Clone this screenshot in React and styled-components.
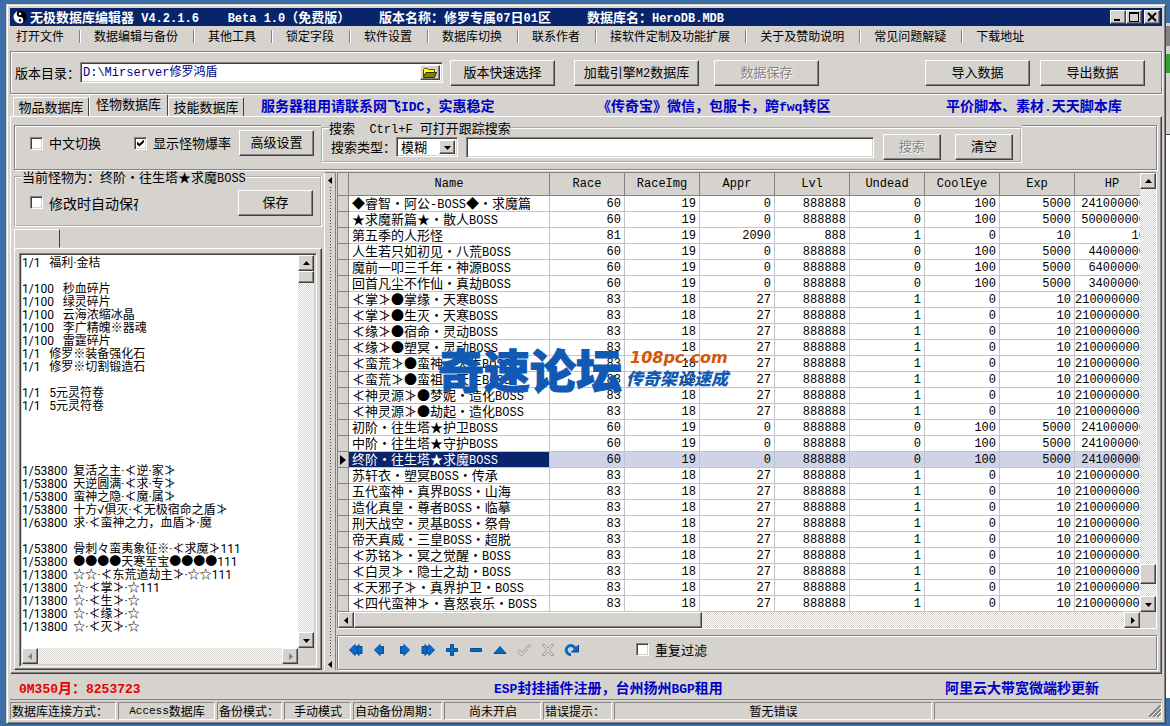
import React from "react";
import styled, { createGlobalStyle, css } from "styled-components";

const face = "#d6d3ce";
const shade = "#848284";
const dark = "#424142";
const navy = "#08246b";
const blue = "#0000c6";
const cjk = '"Noto Sans CJK SC", sans-serif';
const mono = '"Liberation Mono", "Noto Sans CJK SC", monospace';

const menuItems = [
  "打开文件",
  "数据编辑与备份",
  "其他工具",
  "锁定字段",
  "软件设置",
  "数据库切换",
  "联系作者",
  "接软件定制及功能扩展",
  "关于及赞助说明",
  "常见问题解疑",
  "下载地址",
];

const columns = ["Race", "RaceImg", "Appr", "Lvl", "Undead", "CoolEye", "Exp", "HP"];

const tower = (hp) => [60, 19, 0, 888888, 0, 100, 5000, hp];
const boss = [83, 18, 27, 888888, 1, 0, 10, 2100000000];

const monsters = [
  ["◆睿智·阿公-BOSS◆·求魔篇", tower(241000000)],
  ["★求魔新篇★·散人BOSS", tower(500000000)],
  ["第五季的人形怪", [81, 19, 2090, 888, 1, 0, 10, 10]],
  ["人生若只如初见·八荒BOSS", tower(44000000)],
  ["魔前一叩三千年·神源BOSS", tower(64000000)],
  ["回首凡尘不作仙·真劫BOSS", tower(34000000)],
  ["≮掌≯●掌缘·天寒BOSS", boss],
  ["≮掌≯●生灭·天寒BOSS", boss],
  ["≮缘≯●宿命·灵动BOSS", boss],
  ["≮缘≯●塑冥·灵动BOSS", boss],
  ["≮蛮荒≯●蛮神·天生BOSS", boss],
  ["≮蛮荒≯●蛮祖·天生BOSS", boss],
  ["≮神灵源≯●梦妮·造化BOSS", boss],
  ["≮神灵源≯●劫起·造化BOSS", boss],
  ["初阶·往生塔★护卫BOSS", tower(241000000)],
  ["中阶·往生塔★守护BOSS", tower(241000000)],
  ["终阶·往生塔★求魔BOSS", tower(241000000)],
  ["苏轩衣·塑冥BOSS·传承", boss],
  ["五代蛮神·真界BOSS·山海", boss],
  ["造化真皇·尊者BOSS·临摹", boss],
  ["刑天战空·灵基BOSS·祭骨", boss],
  ["帝天真威·三皇BOSS·超脱", boss],
  ["≮苏铭≯·冥之觉醒·BOSS", boss],
  ["≮白灵≯·隐士之劫·BOSS", boss],
  ["≮天邪子≯·真界护卫·BOSS", boss],
  ["≮四代蛮神≯·喜怒哀乐·BOSS", boss],
];

const currentRow = 16;

const drops = `1/1   福利·金桔

1/100   秒血碎片
1/100   绿灵碎片
1/100   云海浓缩冰晶
1/100   李广精魄※器魂
1/100   雷霆碎片
1/1   修罗※装备强化石
1/1   修罗※切割锻造石

1/1   5元灵符卷
1/1   5元灵符卷




1/53800  复活之主·≮逆·家≯
1/53800  天逆圆满·≮求·专≯
1/53800  蛮神之隐·≮魔·属≯
1/53800  十方√俱灭·≮无极宿命之盾≯
1/63800  求·≮蛮神之力，血盾≯·魔

1/53800  骨刺々蛮夷象征※·≮求魔≯111
1/53800  ●●●●天寒至宝●●●●111
1/13800  ☆☆·≮东荒道劫主≯·☆☆111
1/13800  ☆·≮掌≯·☆111
1/13800  ☆·≮生≯·☆
1/13800  ☆·≮缘≯·☆
1/13800  ☆·≮灭≯·☆`;

const statusParts = [
  { text: "数据库连接方式：", width: 106 },
  { text: "Access数据库", width: 97, center: true },
  { text: "备份模式：", width: 65 },
  { text: "手动模式", width: 67, center: true },
  { text: "自动备份周期：", width: 89 },
  { text: "尚未开启", width: 97, center: true },
  { text: "错误提示：", width: 69 },
  { text: "暂无错误", width: 318, center: true },
];

// Latin runs use a narrower monospaced face, the middle dot takes a full cell
function Mixed({ text }) {
  return text.split(/([ -~]+|·)/).map((part, i) => {
    if (part === "·") return <Dot key={i}>·</Dot>;
    if (i % 2) return <Latin key={i}>{part}</Latin>;
    return part;
  });
}

function Arrow({ dir, disabled }) {
  const paths = {
    up: "M0 5h7L3.5 1z",
    down: "M0 2h7L3.5 6z",
    left: "M5 0v7L1 3.5z",
    right: "M2 0v7L6 3.5z",
  };
  return (
    <svg width="7" height="7" viewBox="0 0 7 7" aria-hidden="true">
      <path d={paths[dir]} fill={disabled ? shade : "#000"} />
    </svg>
  );
}

function NavIcon({ name }) {
  const fill = { fill: "#0869c6", stroke: "#084a9c", strokeWidth: 1 };
  const off = { fill: "none", stroke: "#a5a29c", strokeWidth: 1 };
  const icons = {
    first: (
      <g {...fill}>
        <path d="M5.500 8 11 2.500v2h3v7h-3v2z" />
        <path d="M1.500 8 7 2.500v2h2.500v7H7v2z" />
      </g>
    ),
    prior: <path {...fill} d="M2.500 8 8 2.500v2h3.500v7H8v2z" />,
    next: <path {...fill} d="M13.500 8 8 2.500v2H4.500v7H8v2z" />,
    last: (
      <g {...fill}>
        <path d="M10.500 8 5 2.500v2H2v7h3v2z" />
        <path d="M14.500 8 9 2.500v2H6.500v7H9v2z" />
      </g>
    ),
    insert: <path {...fill} d="M6.500 2.500h3v4h4v3h-4v4h-3v-4h-4v-3h4z" />,
    remove: <path {...fill} d="M2.500 6.500h11v3h-11z" />,
    edit: <path {...fill} d="M8 4.500 14 11.500H2z" />,
    post: <path {...off} d="M1.500 9 3.500 7.500 6 10.500 12.500 2.500 14.500 3.500 6.500 13.500H5z" />,
    cancel: (
      <path
        {...off}
        d="M2 2.500h3l3 3.500 3-3.500h3L9.500 8l4.500 5.500h-3L8 10l-3 3.500H2L6.500 8z"
      />
    ),
    refresh: (
      <g>
        <path d="M7 12.500A4.500 4.500 0 1 1 11 6.500" fill="none" stroke="#0869c6" strokeWidth="3" />
        <path d="M14.500 3v7h-7z" fill="#0869c6" stroke="#084a9c" />
      </g>
    ),
  };
  return (
    <svg width="16" height="16" viewBox="0 0 16 16" aria-hidden="true">
      {icons[name]}
    </svg>
  );
}

function ScrollBar({ horizontal, disabled, children }) {
  return (
    <Track $horizontal={horizontal}>
      <ScrollButton disabled={disabled} aria-label={horizontal ? "向左" : "向上"}>
        <Arrow dir={horizontal ? "left" : "up"} disabled={disabled} />
      </ScrollButton>
      <Run $horizontal={horizontal}>{children}</Run>
      <ScrollButton disabled={disabled} aria-label={horizontal ? "向右" : "向下"}>
        <Arrow dir={horizontal ? "right" : "down"} disabled={disabled} />
      </ScrollButton>
    </Track>
  );
}

function TitleBar() {
  return (
    <Title>
      <svg width="14" height="14" viewBox="0 0 14 14" aria-hidden="true">
        <circle cx="7" cy="7" r="6.500" fill="#000" />
        <path d="M7 .5a6.500 6.500 0 0 0 0 13 3.250 3.250 0 0 0 0-6.500 3.250 3.250 0 0 1 0-6.500z" fill="#fff" />
        <circle cx="7" cy="3.700" r="1.200" fill="#fff" />
        <circle cx="7" cy="10.300" r="1.200" fill="#000" />
      </svg>
      <TitleText>
        <Mixed text="无极数据库编辑器 V4.2.1.6    Beta 1.0（免费版）    版本名称：修罗专属07日01区     数据库名：HeroDB.MDB" />
      </TitleText>
      <WindowButton aria-label="最小化">
        <svg width="12" height="10"><path d="M2 7h6v2H2z" /></svg>
      </WindowButton>
      <WindowButton aria-label="最大化">
        <svg width="12" height="10"><path d="M1 0h10v10H1zM2 2v7h8V2z" fillRule="evenodd" /></svg>
      </WindowButton>
      <WindowButton aria-label="关闭" $last>
        <svg width="12" height="10"><path d="M2 1l8 8M10 1l-8 8" stroke="#000" strokeWidth="2" /></svg>
      </WindowButton>
    </Title>
  );
}

function MonsterPanel() {
  return (
    <Side>
      <GroupBox>
        <Legend>当前怪物为：终阶·往生塔★求魔<Latin>BOSS</Latin></Legend>
        <SaveRow>
          <CheckLabel $cut>
            <CheckBox type="checkbox" />
            <span>修改时自动保存</span>
          </CheckLabel>
          <Button $width={75}>保存</Button>
        </SaveRow>
      </GroupBox>
      <BlankTab />
      <MemoPage>
        <MemoFrame>
          <Memo aria-label="怪物爆率" wrap="off" spellCheck="false" defaultValue={drops} />
          <ScrollBar>
            <Thumb $size={12} />
          </ScrollBar>
          <ScrollBar horizontal disabled />
        </MemoFrame>
      </MemoPage>
    </Side>
  );
}

function MonsterGrid() {
  return (
    <GridFrame>
      <TableView>
        <Table>
          <colgroup>
            <col width="11" />
            <col width="201" />
            {columns.map((c) => <col key={c} width="75" />)}
          </colgroup>
          <thead>
            <tr>
              <HeadCell />
              <HeadCell>Name</HeadCell>
              {columns.map((c) => <HeadCell key={c}>{c}</HeadCell>)}
            </tr>
          </thead>
          <tbody>
            {monsters.map(([name, values], i) => (
              <Row key={name} $current={i === currentRow}>
                <Indicator>
                  {i === currentRow && (
                    <svg width="6" height="10"><path d="M0 0v10l6-5z" /></svg>
                  )}
                </Indicator>
                <NameCell $current={i === currentRow}><Mixed text={name} /></NameCell>
                {values.map((v, j) => <NumberCell key={columns[j]}>{v}</NumberCell>)}
              </Row>
            ))}
          </tbody>
        </Table>
      </TableView>
      <ScrollBar>
        <Thumb $size={20} $end={12} />
      </ScrollBar>
      <ScrollBar horizontal>
        <Thumb $horizontal $size={348} />
      </ScrollBar>
      <Watermark>
        <MarkName>奇速论坛</MarkName>
        <MarkSide>
          <MarkSite>108pc.com</MarkSite>
          <MarkNote>传奇架设速成</MarkNote>
        </MarkSide>
      </Watermark>
    </GridFrame>
  );
}

function App() {
  const nav = ["first", "prior", "next", "last", "insert", "remove", "edit", "post", "cancel", "refresh"];

  return (
    <Desktop>
      <GlobalStyle />
      <Window>
        <TitleBar />
        <Menu>
          {menuItems.map((item) => <MenuItem key={item}>{item}</MenuItem>)}
        </Menu>

        <PathPanel>
          <label htmlFor="path">版本目录：</label>
          <PathField>
            <TextInput id="path" $path defaultValue="D:\Mirserver修罗鸿盾" />
            <FolderButton aria-label="浏览">
              <svg width="14" height="11" viewBox="0 0 14 11">
                <path d="M.5 9.500V2.500l1-1h3l1 1h6v3" fill="#ffff00" stroke="#525100" />
                <path d="M.5 9.500 3 5.500h10.500l-2 5h-11z" fill="#848200" stroke="#313000" />
              </svg>
            </FolderButton>
          </PathField>
          <Button $width={105} $left={7}>版本快速选择</Button>
          <Button $width={125} $left={19}><Mixed text="加载引擎M2数据库" /></Button>
          <Button $width={105} $left={15} disabled>数据保存</Button>
          <Spacer />
          <Button $width={105}>导入数据</Button>
          <Button $width={105} $left={10}>导出数据</Button>
        </PathPanel>

        <TabStrip>
          <Tab>物品数据库</Tab>
          <Tab $active>怪物数据库</Tab>
          <Tab>技能数据库</Tab>
          <AdRow>
            <Ad href="#idc"><Mixed text="服务器租用请联系网飞IDC，实惠稳定" /></Ad>
            <Ad href="#cqb"><Mixed text="《传奇宝》微信，包服卡，跨fwq转区" /></Ad>
            <Ad href="#script"><Mixed text="平价脚本、素材.天天脚本库" /></Ad>
          </AdRow>
        </TabStrip>

        <Page>
          <ToolPanel>
            <ToolGroup>
              <CheckLabel>
                <CheckBox type="checkbox" />
                <span>中文切换</span>
              </CheckLabel>
              <Spacer />
              <CheckLabel>
                <CheckBox type="checkbox" defaultChecked />
                <span>显示怪物爆率</span>
              </CheckLabel>
              <Button $width={75} $left={8}>高级设置</Button>
            </ToolGroup>
            <SearchArea>
              <GroupBox>
                <Legend><Mixed text="搜索  Ctrl+F 可打开跟踪搜索" /></Legend>
                <SearchRow>
                  <label htmlFor="mode">搜索类型：</label>
                  <SelectFrame>
                    <Select id="mode"><option>模糊</option></Select>
                    <DropButton><Arrow dir="down" /></DropButton>
                  </SelectFrame>
                  <SearchField><TextInput aria-label="搜索内容" /></SearchField>
                  <Button $width={58} disabled>搜索</Button>
                  <Button $width={58} $left={14}>清空</Button>
                </SearchRow>
              </GroupBox>
            </SearchArea>
          </ToolPanel>

          <Body>
            <MonsterPanel />
            <Splitter>
              <Arrow dir="left" />
              <Dots />
              <Arrow dir="left" />
            </Splitter>
            <Main>
              <MonsterGrid />
              <NavPanel>
                {nav.map((n) => (
                  <NavButton key={n} aria-label={n} disabled={n === "post" || n === "cancel"}>
                    <NavIcon name={n} />
                  </NavButton>
                ))}
                <FilterLabel>
                  <CheckBox type="checkbox" />
                  <span>重复过滤</span>
                </FilterLabel>
              </NavPanel>
            </Main>
          </Body>
        </Page>

        <FootAds>
          <Ad href="#qm" $red><Mixed text="0M350月：8253723" /></Ad>
          <Ad href="#esp"><Mixed text="ESP封挂插件注册，台州扬州BGP租用" /></Ad>
          <Ad href="#cloud">阿里云大带宽微端秒更新</Ad>
        </FootAds>

        <StatusBar>
          {statusParts.map((s) => (
            <StatusPart key={s.text} $width={s.width} $center={s.center}>
              <Mixed text={s.text} />
            </StatusPart>
          ))}
          <StatusPart $grow>
            <svg width="12" height="12" viewBox="0 0 12 12" aria-hidden="true">
              <path d="M0 12 12 0M4 12l8-8M8 12l4-4" stroke={shade} strokeWidth="2" />
              <path d="M2 12 12 2M6 12l6-6M10 12l2-2" stroke="#fff" />
            </svg>
          </StatusPart>
        </StatusBar>
      </Window>
      <BackWindow>
        <BackBar />
        <BackGo />
        <BackTools />
      </BackWindow>
    </Desktop>
  );
}

const GlobalStyle = createGlobalStyle`
  *, *::before, *::after {
    box-sizing: border-box;
  }
  body {
    margin: 0;
    background: #3a6ea5;
    font: 13px/16px ${cjk};
    color: #000;
  }
  button, input, select, textarea {
    font: inherit;
    color: inherit;
    margin: 0;
    padding: 0;
    border-radius: 0;
  }
`;

const raised = css`
  background: ${face};
  border: 1px solid;
  border-color: #fff ${dark} ${dark} #fff;
  box-shadow: inset -1px -1px ${shade};
`;

const sunken = css`
  background: #fff;
  border: 1px solid;
  border-color: ${shade} #fff #fff ${shade};
  box-shadow: inset 1px 1px ${dark}, inset -1px -1px ${face};
  padding: 2px;
`;

const groove = css`
  border: 1px solid ${shade};
  box-shadow: inset 1px 1px #fff, 1px 1px #fff;
`;

const Desktop = styled.div`
  display: flex;
  min-height: 100vh;
  padding: 4px 0 3px 6px;
`;

const Window = styled.main`
  flex: 1;
  min-width: 0;
  display: flex;
  flex-direction: column;
  background: ${face};
  border: 1px solid;
  border-color: ${face} ${dark} ${dark} ${face};
  box-shadow: inset 1px 1px #fff, inset -1px -1px ${shade};
  padding: 3px;
`;

const BackWindow = styled.aside`
  width: 4px;
  margin: 19px 0 26px;
  background: #fff;
`;

const BackBar = styled.div`
  height: 31px;
  background: ${shade};
  border-top: 3px solid ${face};
  border-bottom: 8px solid ${face};
`;

const BackGo = styled.div`
  height: 19px;
  background: #31a231;
`;

const BackTools = styled.div`
  height: 62px;
  background: ${face};
  border-bottom: 1px solid ${dark};
`;

const Latin = styled.span`
  font-family: ${mono};
  font-size: 12px;
  line-height: 0;
`;

const Dot = styled.span`
  display: inline-block;
  width: 1em;
  line-height: 0;
  text-align: center;
`;

const Spacer = styled.div`
  flex: 1;
`;

const Title = styled.header`
  display: flex;
  align-items: center;
  height: 18px;
  padding: 0 2px 0 3px;
  background: ${navy};
  color: #fff;
  font-weight: bold;
`;

const TitleText = styled.h1`
  flex: 1;
  margin: 0;
  padding-left: 3px;
  font-size: 13px;
  line-height: 18px;
  white-space: pre;
`;

const WindowButton = styled.button`
  ${raised}
  display: flex;
  align-items: center;
  justify-content: center;
  width: 16px;
  height: 14px;
  margin-left: ${(p) => (p.$last ? "2px" : "0")};
`;

const Menu = styled.nav`
  display: flex;
  height: 25px;
  padding: 2px 0 0 6px;
  font-size: 12px;
`;

const MenuItem = styled.button`
  display: flex;
  height: 16px;
  border: 0;
  background: none;
  white-space: nowrap;

  &:not(:last-child)::after {
    content: "";
    width: 2px;
    height: 13px;
    margin: 2px 13px 0 15px;
    border-left: 1px solid ${shade};
    border-right: 1px solid #fff;
  }
`;

const PathPanel = styled.section`
  ${groove}
  display: flex;
  align-items: center;
  height: 43px;
  padding: 0 16px 0 4px;
`;

const Button = styled.button`
  ${raised}
  flex: none;
  width: ${(p) => p.$width}px;
  height: 26px;
  padding-bottom: 2px;
  margin-left: ${(p) => p.$left || 0}px;
  white-space: nowrap;

  &:disabled {
    color: ${shade};
    text-shadow: 1px 1px #fff;
  }
`;

const PathField = styled.div`
  ${sunken}
  display: flex;
  width: 363px;
  height: 21px;
`;

const TextInput = styled.input`
  flex: 1;
  min-width: 0;
  width: 100%;
  border: 0;
  outline: 0;
  background: #fff;
  ${(p) =>
    p.$path &&
    css`
      font-family: ${mono};
      font-size: 12px;
      color: #000084;
    `}
`;

const FolderButton = styled.button`
  ${raised}
  display: flex;
  align-items: center;
  justify-content: center;
  width: 20px;
`;

const TabStrip = styled.div`
  display: flex;
  align-items: flex-end;
  height: 22px;
  padding-left: 3px;
`;

const Tab = styled.button`
  height: ${(p) => (p.$active ? 22 : 19)}px;
  width: ${(p) => (p.$active ? 79 : 76)}px;
  padding-bottom: ${(p) => (p.$active ? 2 : 0)}px;
  background: ${face};
  border: 1px solid;
  border-color: #fff ${dark} ${face} #fff;
  border-bottom-width: ${(p) => (p.$active ? 1 : 0)}px;
  border-radius: 2px 2px 0 0;
  white-space: nowrap;
`;

const AdRow = styled.div`
  flex: 1;
  display: grid;
  grid-template-columns: 336px 349px 1fr;
  padding: 0 0 2px 17px;
`;

const Ad = styled.a`
  font-size: 14px;
  line-height: 18px;
  font-weight: bold;
  color: ${(p) => (p.$red ? "#e70000" : blue)};
  text-decoration: none;
  white-space: nowrap;

  ${Latin} {
    font-size: 13px;
  }
`;

const Page = styled.section`
  flex: 1;
  display: flex;
  flex-direction: column;
  border: 1px solid;
  border-color: #fff ${dark} ${dark} #fff;
  box-shadow: inset -1px -1px ${shade};
  padding: 8px 4px 3px 3px;
`;

const ToolPanel = styled.div`
  ${groove}
  display: flex;
  height: 45px;
`;

const ToolGroup = styled.div`
  display: flex;
  align-items: center;
  width: 306px;
  padding: 0 7px 9px 15px;
`;

const CheckLabel = styled.label`
  display: flex;
  align-items: center;
  gap: 6px;
  white-space: nowrap;
  ${(p) =>
    p.$cut &&
    css`
      width: 108px;
      overflow: hidden;
      font-size: 14px;
    `}
`;

const CheckBox = styled.input`
  ${sunken}
  appearance: none;
  flex: none;
  width: 13px;
  height: 13px;

  &:checked::before {
    content: "";
    display: block;
    width: 7px;
    height: 7px;
    background: #000;
    clip-path: polygon(0 30%, 35% 60%, 100% 0, 100% 40%, 35% 100%, 0 70%);
  }
`;

const SearchArea = styled.div`
  flex: 1;
  height: 43px;
  margin: -5px 134px 0 0;
  background: ${face};
`;

const GroupBox = styled.fieldset`
  min-width: 0;
  margin: 0;
  padding: 0;
  border: 2px groove #fff;
`;

const Legend = styled.legend`
  margin-left: 6px;
  padding: 0;
  line-height: 14px;
  white-space: pre;
`;

const SearchRow = styled.div`
  display: flex;
  align-items: center;
  height: 26px;
  padding: 0 7px 2px 8px;
  white-space: nowrap;
`;

const SelectFrame = styled.div`
  ${sunken}
  display: flex;
  width: 62px;
  height: 20px;
`;

const Select = styled.select`
  appearance: none;
  flex: 1;
  min-width: 0;
  padding-left: 2px;
  border: 0;
  background: #fff;
  line-height: 14px;
`;

const DropButton = styled.span`
  ${raised}
  display: flex;
  align-items: center;
  justify-content: center;
  width: 16px;
  pointer-events: none;
`;

const SearchField = styled.div`
  ${sunken}
  flex: 1;
  display: flex;
  height: 21px;
  margin: 0 9px 0 8px;
`;

const Body = styled.div`
  flex: 1;
  display: flex;
`;

const Side = styled.section`
  display: flex;
  flex-direction: column;
  width: 309px;
  padding-right: 1px;
`;

const SaveRow = styled.div`
  display: flex;
  align-items: center;
  justify-content: space-between;
  height: 41px;
  padding: 0 7px 4px 14px;
`;

const BlankTab = styled.div`
  width: 46px;
  height: 19px;
  margin-top: 2px;
  border: 1px solid;
  border-color: #fff ${dark} ${face} #fff;
`;

const MemoPage = styled.div`
  ${raised}
  flex: 1;
  display: flex;
  padding: 4px 4px 2px;
`;

const MemoFrame = styled.div`
  ${sunken}
  flex: 1;
  display: grid;
  grid-template-columns: 1fr 16px;
  grid-template-rows: 1fr 16px;
  padding-top: 1px;
  background: ${face};
`;

const Memo = styled.textarea`
  display: block;
  width: 100%;
  height: 100%;
  padding-top: 2px;
  border: 0;
  outline: 0;
  resize: none;
  overflow: hidden;
  background: #fff;
  font-family: Roboto, ${cjk};
  font-size: 12px;
  line-height: 13px;
`;

const Track = styled.div`
  display: flex;
  flex-direction: ${(p) => (p.$horizontal ? "row" : "column")};
  min-width: 0;
  background: repeating-conic-gradient(#fff 0 25%, ${face} 0 50%) 0 0 / 2px 2px;
`;

const ScrollButton = styled.button`
  ${raised}
  display: flex;
  flex: none;
  align-items: center;
  justify-content: center;
  width: 16px;
  height: 16px;
`;

const Run = styled.div`
  flex: 1;
  display: flex;
  flex-direction: ${(p) => (p.$horizontal ? "row" : "column")};
`;

const Thumb = styled.div`
  ${raised}
  ${(p) => (p.$horizontal ? "width" : "height")}: ${(p) => p.$size}px;
  ${(p) =>
    p.$end &&
    css`
      margin-top: auto;
      margin-bottom: ${p.$end}px;
    `}
`;

const Splitter = styled.div`
  display: flex;
  flex-direction: column;
  align-items: center;
  gap: 3px;
  width: 12px;
  margin: 2px 1px 0;
  padding: 4px 0 2px;
  border: 1px solid ${shade};
  border-left-color: #fff;
  border-bottom: 0;
`;

const Dots = styled.div`
  flex: 1;
  width: 1px;
  background: repeating-linear-gradient(${dark} 0 1px, transparent 1px 3px);
`;

const Main = styled.section`
  flex: 1;
  min-width: 0;
  display: flex;
  flex-direction: column;
  gap: 6px;
  padding-top: 2px;
`;

const GridFrame = styled.div`
  position: relative;
  display: grid;
  grid-template-columns: minmax(0, 1fr) 16px;
  grid-template-rows: auto 16px;
  border: 1px solid;
  border-color: ${shade} #fff #fff ${shade};
`;

const TableView = styled.div`
  overflow: hidden;
  background: #fff;
`;

const Table = styled.table`
  table-layout: fixed;
  width: 812px;
  border-spacing: 0;
`;

const HeadCell = styled.th`
  height: 23px;
  padding: 0;
  background: ${face};
  border-right: 1px solid ${shade};
  border-bottom: 1px solid ${shade};
  font-family: ${mono};
  font-size: 12px;
  font-weight: normal;
`;

const Row = styled.tr`
  background: ${(p) => (p.$current ? "#ced3e7" : "#fff")};
`;

const Indicator = styled.td`
  height: 16px;
  padding: 0 0 0 2px;
  background: ${face};
  border-right: 1px solid ${shade};
  border-bottom: 1px solid ${shade};
  line-height: 0;
`;

const NameCell = styled.td`
  height: 16px;
  padding: 0 0 2px 3px;
  border-right: 1px solid #c6c3c6;
  border-bottom: 1px solid #c6c3c6;
  line-height: 13px;
  white-space: nowrap;
  ${(p) =>
    p.$current &&
    css`
      background: ${navy};
      color: #fff;
    `}
`;

const NumberCell = styled.td`
  height: 16px;
  padding: 2px 3px 0 0;
  border-right: 1px solid #c6c3c6;
  border-bottom: 1px solid #c6c3c6;
  font-family: ${mono};
  font-size: 12px;
  line-height: 13px;
  text-align: right;
`;

const Watermark = styled.div`
  position: absolute;
  left: 100px;
  top: 172px;
  display: flex;
  align-items: center;
  color: #1059b5;
  font-style: italic;
  font-weight: 900;
  white-space: nowrap;
  pointer-events: none;
`;

const MarkName = styled.div`
  font-size: 46px;
  font-style: normal;
  line-height: 46px;
  -webkit-text-stroke: 1px #1059b5;
`;

const MarkSide = styled.div`
  padding-left: 4px;
`;

const MarkSite = styled.div`
  padding-left: 4px;
  font-family: "DejaVu Sans", sans-serif;
  font-size: 16px;
  line-height: 20px;
  color: #d65508;
`;

const MarkNote = styled.div`
  font-size: 17px;
  line-height: 20px;
`;

const NavPanel = styled.div`
  ${groove}
  flex: 1;
  display: flex;
  align-items: center;
  min-height: 35px;
  padding: 0 6px 6px;
`;

const NavButton = styled.button`
  display: flex;
  align-items: center;
  justify-content: center;
  width: 24px;
  height: 24px;
  border: 0;
  background: none;
`;

const FilterLabel = styled(CheckLabel)`
  margin-left: 52px;
`;

const FootAds = styled.div`
  display: grid;
  grid-template-columns: 475px 451px 1fr;
  align-items: center;
  height: 26px;
  padding-left: 9px;
  border-bottom: 1px solid ${shade};
`;

const StatusBar = styled.footer`
  display: flex;
  gap: 2px;
  height: 20px;
  padding-top: 2px;
  font-size: 12px;

  ${Latin} {
    font-size: 11px;
  }
`;

const StatusPart = styled.div`
  display: flex;
  flex: ${(p) => (p.$grow ? "1" : "none")};
  align-items: center;
  justify-content: ${(p) => (p.$grow ? "flex-end" : p.$center ? "center" : "flex-start")};
  width: ${(p) => (p.$width ? `${p.$width}px` : "auto")};
  padding-left: 1px;
  overflow: hidden;
  border: 1px solid;
  border-color: ${shade} #fff #fff ${shade};
  white-space: nowrap;
`;

export default App;
